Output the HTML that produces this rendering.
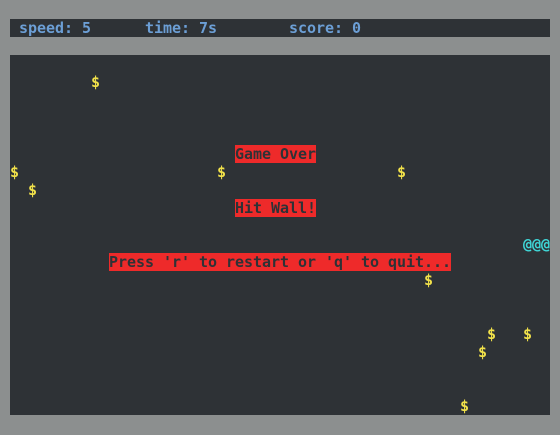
<!DOCTYPE html>
<html><head><style>
html,body{margin:0;padding:0}
body{width:560px;height:435px;background:#8c8f8f;position:relative;overflow:hidden;font-family:"DejaVu Sans Mono","Liberation Mono",monospace;font-weight:bold;font-size:15px}
.bar{position:absolute;left:10px;top:19px;width:540px;height:18px;background:#2e3236}
.game{position:absolute;left:10px;top:55px;width:540px;height:360px;background:#2e3236}
.t{position:absolute;height:18px;line-height:18px;white-space:pre;letter-spacing:-0.03px}
.h{color:#6c9fd6}
.y{color:#f2e24a}
.c{color:#3fd6d6}
.r{background:#ee2a2a;color:#2e3236}
</style></head><body>
<div class="bar"></div>
<div class="t h" style="left:19px;top:19px">speed: 5</div>
<div class="t h" style="left:145px;top:19px">time: 7s</div>
<div class="t h" style="left:289px;top:19px">score: 0</div>
<div class="game"></div>
<div class="t y" style="left:91px;top:73px">$</div>
<div class="t y" style="left:10px;top:163px">$</div>
<div class="t y" style="left:28px;top:181px">$</div>
<div class="t y" style="left:217px;top:163px">$</div>
<div class="t y" style="left:397px;top:163px">$</div>
<div class="t r" style="left:235px;top:145px">Game Over</div>
<div class="t r" style="left:235px;top:199px">Hit Wall!</div>
<div class="t r" style="left:109px;top:253px">Press 'r' to restart or 'q' to quit...</div>
<div class="t c" style="left:523px;top:235px">@@@</div>
<div class="t y" style="left:424px;top:271px">$</div>
<div class="t y" style="left:487px;top:325px">$</div>
<div class="t y" style="left:523px;top:325px">$</div>
<div class="t y" style="left:478px;top:343px">$</div>
<div class="t y" style="left:460px;top:397px">$</div>
</body></html>
